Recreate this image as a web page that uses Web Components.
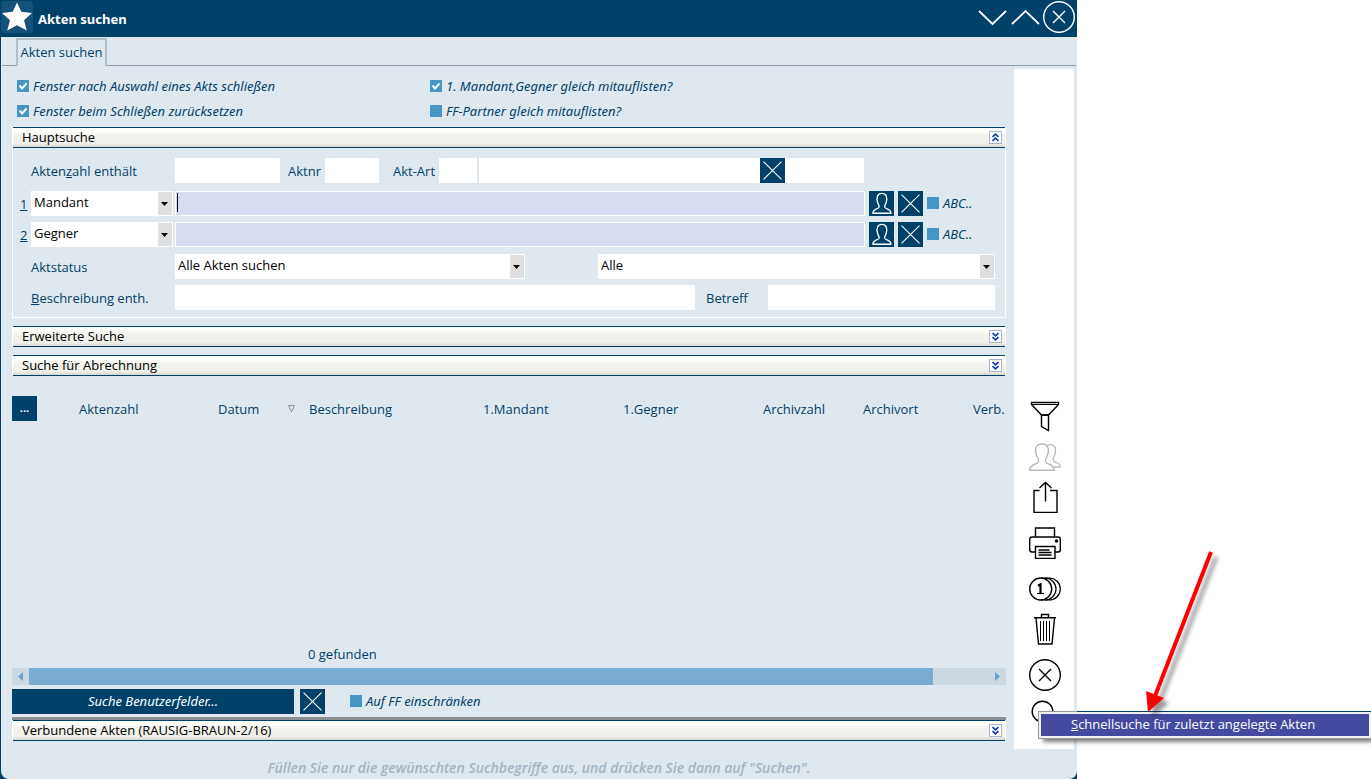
<!DOCTYPE html>
<html lang="de">
<head>
<meta charset="utf-8">
<title>Akten suchen</title>
<style>
  :root {
    --navy: #00416a;
    --panel: #e0e8ef;
    --accent: #4595c5;
    --lilac: #d6ddf1;
    --slanted: "Noto Sans", "Open Sans", sans-serif;
  }
  body {
    margin: 0;
    background: #fff;
    color: var(--navy);
    font: 13px/18px "Open Sans", "Noto Sans", sans-serif;
  }
</style>
</head>
<body>
<akten-page></akten-page>

<script>
const define = (name, html, setup) => {
  const template = document.createElement('template');
  template.innerHTML = html;
  customElements.define(name, class extends HTMLElement {
    constructor() {
      super();
      this.attachShadow({ mode: 'open' }).append(template.content.cloneNode(true));
    }
    connectedCallback() {
      if (setup) setup(this, this.shadowRoot);
    }
  });
};

/* Line icons, all drawn on a 32 x 32 grid. */
const ICONS = {
  filter: '<path d="M2.500 1.500h27v2l-10 10.500h-7L2.500 3.500z"/><path d="M12.500 14v11.500l7 4V14z"/><path d="M3 3.500h26" stroke-width="1"/>',
  people: '<path d="M0.700 29.300C0.500 23 8.500 23.500 9.500 21c.6-2-.2-3-1.500-5.500C6 11.500 5 3 13 3s7 8.500 5 12.500c-1.300 2.500-2.100 3.500-1.500 5.500 1 2.500 9 2 8.800 8.300z"/><path d="M17.500 5.500c2-3 9-2.500 9 3.500 0 3.500-1.200 6-2 7.500-1 2 .2 4 1.500 4.500 2.500 1 5.500 1.500 5.500 5h-6.500"/>',
  share: '<path d="M10.500 9.500h-5.500v22h23v-22H21"/><path d="M16.500 20.500V2M10.500 7l6-5.500 6 5.500"/>',
  printer: '<path d="M6.500 9.500V1h19v8.500"/><path d="M6 25H3q-2.300 0-2.300-2.500V12.500Q.7 10 3 10h26q2.300 0 2.300 2.500V22.500q0 2.500-2.300 2.500h-3"/><path d="M6.500 19.500h19.500v12H6.500z"/><path d="M9.500 23h11M9.500 25.500h13M9.500 28h13"/><circle cx="27.500" cy="14" r="1" fill="currentColor"/>',
  coins: '<circle cx="11.700" cy="16" r="11"/><g stroke-width="1.200"><path d="M16 5a11 11 0 0 1 0 22M20.300 5a11 11 0 0 1 0 22"/><path d="M12 5h8.500M12 27h8.500"/></g><path d="M9 12.800l2.500-1.400V20.500" stroke-width="2.200"/><path d="M8 20.500h7" stroke-width="1.200"/>',
  trash: '<path d="M5 4.700h22M12.500 4.500v-3h7v3M7 5l2.500 26h13.500L25.500 5"/><path d="M11.500 8v20M14.500 8v20M17.500 8v20M20.500 8v20" stroke-width="1"/>',
  cancel: '<circle cx="16" cy="16" r="15.300"/><path d="M10 10l12 12M22 10L10 22"/>',
  search: '<circle cx="13.500" cy="12.500" r="10.300"/><path d="M21 20l9 9"/>',
  down: '<path d="M2 10l13.500 13L29 10" stroke-width="1.800"/>',
  up: '<path d="M2 23l13.500-13L29 23" stroke-width="1.800"/>',
  cross: '<path d="M4.500 4.500l23 23M27.500 4.500l-23 23"/>',
  person: '<path d="M5 28.500c-.5-6 7.500-5 8-8 .2-2-1.500-3.500-2.200-6.500C9.500 8 10.500 3 16.500 3s7 5 5.700 11c-.7 3-2.400 4.500-2.200 6.500.5 3 8.500 2 8 8z" stroke-width="1.700"/>'
};

define('ak-icon', `
  <style>
    :host { display: block; width: 32px; height: 32px; }
    svg { display: block; width: 100%; height: 100%; }
  </style>
  <svg viewBox="0 0 32 32" fill="none" stroke="currentColor" stroke-width="1.400" aria-hidden="true"></svg>
`, (host, root) => { root.querySelector('svg').innerHTML = ICONS[host.getAttribute('name')]; });

/* Square navy button with an icon or short text in its slot. */
define('ak-button', `
  <style>
    :host { display: block; flex: none; width: 25px; height: 25px; }
    button { display: flex; align-items: center; justify-content: center; width: 100%; height: 100%; padding: 0 0 1px; border: 0; background: var(--navy); color: #fff; font: inherit; cursor: pointer; }
    ::slotted(ak-icon) { width: 25px; height: 25px; }
  </style>
  <button type="button"><slot></slot></button>
`, (host, root) => {
  const label = host.getAttribute('label');
  if (label) root.querySelector('button').setAttribute('aria-label', label);
});

define('ak-check', `
  <style>
    :host { display: block; }
    label { display: flex; align-items: center; gap: 4px; height: 24px; font-family: var(--slanted); font-style: italic; white-space: nowrap; }
    span { display: grid; }
    input, svg { grid-area: 1 / 1; width: 12px; height: 12px; margin: 0; }
    input { appearance: none; background: var(--accent); }
    svg { pointer-events: none; visibility: hidden; }
    input:checked + svg { visibility: visible; }
  </style>
  <label><span><input type="checkbox"><svg viewBox="0 0 12 12" fill="none" stroke="#fff" stroke-width="2"><path d="M2.500 5.500l2.500 3 4.500-5"/></svg></span><slot></slot></label>
`, (host, root) => { root.querySelector('input').checked = host.hasAttribute('checked'); });

/* Drop-down frame around a real select passed through the slot. */
define('ak-select', `
  <style>
    :host { display: grid; grid-template-columns: minmax(0, 1fr) 15px; height: 25px; background: #fff; }
    ::slotted(select) { grid-area: 1 / 1 / 2 / 3; width: 100%; height: 25px; margin: 0; padding: 0 20px 4px 3px; border: 0; border-radius: 0; appearance: none; background: none; color: #000; font: inherit; outline: 0; }
    i { grid-area: 1 / 2; display: grid; place-items: center; margin: 1px 1px 1px 0; padding-right: 1px; background: #dfdfdf; pointer-events: none; }
  </style>
  <slot></slot>
  <i><svg width="7" height="4" viewBox="0 0 7 4"><path d="M0 0h7L3.500 4z"/></svg></i>
`);

define('ak-section', `
  <style>
    :host { display: block; }
    .box { border: solid #fff; border-width: 0 1px; }
    :host([open]) .box { border-bottom-width: 1px; }
    header { display: flex; align-items: flex-start; justify-content: space-between; height: 19px; padding: 0 3px 0 9px; border: solid var(--navy); border-width: 1px 0; background: linear-gradient(#fffffa 0 20%, #f7f7f2 30%, #f0f1eb 50% 80%, #d9d5cc); color: #000; }
    h2 { margin: 0; font: inherit; }
    button { display: grid; place-items: center; width: 13px; height: 13px; margin-top: 3px; padding: 0; border: 1px solid #a9b1dc; background: #fff; box-sizing: border-box; }
    :host([open]) button svg { transform: scaleY(-1); }
  </style>
  <div class="box">
    <header><h2></h2><button type="button"><svg width="7" height="9" viewBox="0 0 7 9" fill="none" stroke="#0a3fa8" stroke-width="1.600"><path d="M.5 1l3 2.800L6.500 1M.5 5l3 2.800L6.500 5"/></svg></button></header>
    <slot></slot>
  </div>
`, (host, root) => {
  root.querySelector('h2').textContent = host.getAttribute('heading');
  root.querySelector('button').setAttribute('aria-label', host.getAttribute('heading') + ' umschalten');
});

define('search-form', `
  <style>
    :host { display: block; padding: 10px 10px 7px 7px; }
    form { display: flex; flex-direction: column; gap: 6px; }
    .row { display: flex; align-items: center; height: 25px; }
    .party { margin-top: 2px; }
    .status { margin-top: 1px; }
    .party + .party { margin-top: 0; }
    label { flex: none; box-sizing: border-box; white-space: nowrap; }
    .name { width: 155px; padding-left: 11px; }
    .number { width: 11px; }
    input { box-sizing: border-box; min-width: 0; height: 25px; margin: 0; padding: 0 3px; border: 0; border-radius: 0; background: #fff; color: #000; font: inherit; outline: 0; }
    .nr-label { width: 45px; padding-left: 8px; }
    .art-label { width: 60px; padding-left: 14px; }
    .subject-label { width: 73px; padding-left: 11px; }
    .zahl { width: 105px; }
    .nr { width: 54px; }
    .art { width: 38px; margin-right: 2px; }
    .extra { width: 79px; margin-right: 131px; }
    .grow { flex: 1 1 0; }
    .who { flex: none; width: 142px; margin-right: 2px; }
    .entry { position: relative; display: flex; flex: 1 1 0; }
    .entry input { flex: 1; background: var(--lilac); border: 1px solid #fff; }
    .caret { position: absolute; left: 2px; top: 2px; width: 1px; height: 19px; background: #000; }
    .state { flex: 350 1 0; margin-right: 73px; }
    .kind { flex: 397 1 0; }
    .description { flex: 520 1 520px; }
    .subject { flex: 227 1 227px; }
    ak-button { margin-left: 4px; }
    ak-check { width: 68px; margin-left: 4px; height: 25px; }
    .row .flush { margin-left: 0; }
  </style>
  <form>
    <div class="row">
      <label class="name" for="zahl">Akten<u>z</u>ahl enthält</label>
      <input id="zahl" class="zahl">
      <label class="nr-label" for="nr">Aktnr</label>
      <input id="nr" class="nr">
      <label class="art-label" for="art">Akt-Art</label>
      <input id="art" class="art">
      <input class="grow" aria-label="Bezeichnung der Akt-Art">
      <ak-button class="flush" label="Akt-Art leeren"><ak-icon name="cross"></ak-icon></ak-button>
      <input class="extra" aria-label="Zusatz">
    </div>
    <div class="row party">
      <label class="number" for="p1"><u>1</u></label>
      <ak-select class="who"><select id="p1"><option>Mandant</option></select></ak-select>
      <div class="entry"><input aria-label="Mandant"><span class="caret"></span></div>
      <ak-button label="Person wählen"><ak-icon name="person"></ak-icon></ak-button>
      <ak-button label="Mandant leeren"><ak-icon name="cross"></ak-icon></ak-button>
      <ak-check>ABC..</ak-check>
    </div>
    <div class="row party">
      <label class="number" for="p2"><u>2</u></label>
      <ak-select class="who"><select id="p2"><option>Gegner</option></select></ak-select>
      <div class="entry"><input aria-label="Gegner"></div>
      <ak-button label="Person wählen"><ak-icon name="person"></ak-icon></ak-button>
      <ak-button label="Gegner leeren"><ak-icon name="cross"></ak-icon></ak-button>
      <ak-check>ABC..</ak-check>
    </div>
    <div class="row status">
      <label class="name" for="status">Aktstatus</label>
      <ak-select class="state"><select id="status"><option>Alle Akten suchen</option></select></ak-select>
      <ak-select class="kind"><select aria-label="Aktauswahl"><option>Alle</option></select></ak-select>
    </div>
    <div class="row">
      <label class="name" for="beschr"><u>B</u>eschreibung enth.</label>
      <input id="beschr" class="description">
      <label class="subject-label" for="betreff">Betreff</label>
      <input id="betreff" class="subject">
    </div>
  </form>
`);

define('result-list', `
  <style>
    :host { display: flex; flex-direction: column; }
    table { width: 100%; table-layout: fixed; border-collapse: collapse; }
    th { height: 25px; padding: 0; font-weight: 400; text-align: left; white-space: nowrap; }
    .sorted { display: flex; align-items: center; justify-content: space-between; padding-right: 14px; }
    ak-button { font-weight: 700; font-size: 11px; }
    .space { flex: 1; min-height: 100px; }
    .count { margin: 0 0 5px; padding-left: 296px; }
    .scroll { display: flex; align-items: stretch; height: 17px; background: #ccd9e1; }
    .scroll button { display: grid; place-items: center; flex: none; width: 17px; padding: 0; border: 0; background: none; }
    .thumb { flex: 113; background: #7aacd1; }
    .rest { flex: 7; }
  </style>
  <table>
    <colgroup><col style="width:67px"><col style="width:139px"><col style="width:91px"><col><col style="width:140px"><col style="width:140px"><col style="width:100px"><col style="width:110px"><col style="width:33px"></colgroup>
    <thead><tr>
      <th><ak-button label="Spalten wählen">...</ak-button></th>
      <th>Aktenzahl</th>
      <th><span class="sorted">Datum<svg width="7" height="8" viewBox="0 0 7 8" fill="none" stroke="#8e9499"><path d="M.5.500h6L3.500 7z"/></svg></span></th>
      <th>Beschreibung</th><th>1.Mandant</th><th>1.Gegner</th><th>Archivzahl</th><th>Archivort</th><th>Verb.</th>
    </tr></thead>
    <tbody></tbody>
  </table>
  <div class="space"></div>
  <p class="count">0 gefunden</p>
  <div class="scroll">
    <button type="button" aria-label="Nach links"><svg width="5" height="9" viewBox="0 0 5 9"><path d="M5 0v9L0 4.500z" fill="#6ba3cd"/></svg></button>
    <div class="thumb"></div><div class="rest"></div>
    <button type="button" aria-label="Nach rechts"><svg width="5" height="9" viewBox="0 0 5 9"><path d="M0 0v9L5 4.500z" fill="#6ba3cd"/></svg></button>
  </div>
`);

define('context-menu', `
  <style>
    :host { display: block; box-sizing: border-box; height: 28px; padding: 2px; border: 1px solid #999; border-right: 0; background: #f1f1f3; box-shadow: 4px 4px 4px -1px rgba(0, 0, 0, .5); }
    :host::before { content: ""; position: absolute; top: -1px; left: 38px; right: 0; height: 1px; background: var(--navy); }
    button { display: block; width: 100%; height: 22px; padding: 0 0 2px 30px; border: 0; background: #444a9f; color: #fff; font: inherit; text-align: left; white-space: nowrap; }
  </style>
  <button type="button" role="menuitem"><u>S</u>chnellsuche für zuletzt angelegte Akten</button>
`);

define('tool-rail', `
  <style>
    :host { display: flex; flex-direction: column; justify-content: flex-end; align-items: center; gap: 14px; padding-bottom: 18px; background: #fff; color: #000; }
    div { display: flex; flex-direction: column; gap: 8px; }
    button { display: block; width: 32px; height: 32px; margin: 0 0 0 2px; padding: 0; border: 0; background: none; color: inherit; }
    button:disabled { color: #bbb; }
    .anchor { position: relative; display: block; }
    context-menu { position: absolute; left: 11px; top: 12px; width: 333px; z-index: 2; }
  </style>
  <div>
    <button type="button" aria-label="Filter"><ak-icon name="filter"></ak-icon></button>
    <button type="button" aria-label="Personen" disabled><ak-icon name="people"></ak-icon></button>
    <button type="button" aria-label="Export"><ak-icon name="share"></ak-icon></button>
  </div>
  <div><button type="button" aria-label="Drucken"><ak-icon name="printer"></ak-icon></button></div>
  <div>
    <button type="button" aria-label="Kosten"><ak-icon name="coins"></ak-icon></button>
    <button type="button" aria-label="Löschen"><ak-icon name="trash"></ak-icon></button>
  </div>
  <div>
    <button type="button" aria-label="Abbrechen"><ak-icon name="cancel"></ak-icon></button>
    <span class="anchor">
      <button type="button" aria-label="Suchen"><ak-icon name="search"></ak-icon></button>
      <context-menu role="menu"></context-menu>
    </span>
  </div>
`);

define('title-bar', `
  <style>
    :host { display: flex; align-items: center; height: 37px; background: var(--navy); color: #fff; }
    .star { flex: none; width: 32px; height: 32px; margin: 0 5px 4px 1px; border-radius: 4px; background: #14527b; }
    h1 { flex: 1; margin: 0; font: 700 13px/18px var(--slanted); }
    nav { display: flex; gap: 1px; padding: 0 2px 3px 0; }
    button { display: block; padding: 0; border: 0; background: none; color: #fff; }
  </style>
  <svg class="star" viewBox="0 0 32 32" aria-hidden="true"><path d="M16 1.500l4.300 9.300 10.700 1.200-8 7.300 2.800 10.200L16 24.300 6.200 29.500 9 19.300 1 12l10.700-1.200z" fill="#fff"/></svg>
  <h1><slot></slot></h1>
  <nav>
    <button type="button" aria-label="Verkleinern"><ak-icon name="down"></ak-icon></button>
    <button type="button" aria-label="Vergrößern"><ak-icon name="up"></ak-icon></button>
    <button type="button" aria-label="Schließen"><ak-icon name="cancel"></ak-icon></button>
  </nav>
`);

define('tab-strip', `
  <style>
    :host { display: flex; height: 29px; padding-top: 1px; box-sizing: border-box; }
    :host::before, :host::after { content: ""; border-bottom: 1px solid #8f9ba6; }
    :host::before { width: 14px; margin-left: 1px; }
    :host::after { flex: 1; margin-right: 1px; }
    a { box-sizing: border-box; width: 91px; padding-top: 3px; border: 2px solid #adbfcb; border-bottom: 0; color: inherit; text-align: center; text-decoration: none; white-space: nowrap; }
  </style>
  <a href="#suche"><slot></slot></a>
`);

define('akten-window', `
  <style>
    :host { display: flex; flex-direction: column; min-height: 100vh; background: var(--navy); }
    .body { display: flex; flex-direction: column; flex: 1; margin-left: 1px; border-radius: 0 0 8px 8px; background: var(--panel); }
    .work { display: flex; flex: 1; gap: 8px; padding: 3px 3px 0 11px; }
    main { display: flex; flex-direction: column; flex: 1; min-width: 0; padding-top: 5px; }
    tool-rail { flex: none; width: 60px; }
    .options { display: grid; grid-template-columns: 413px 1fr; grid-auto-rows: 25px; padding-left: 5px; margin-bottom: 3px; }
    .gap { margin-top: 8px; }
    result-list { flex: 1; margin-top: 20px; }
    .actions { display: flex; height: 25px; margin: 4px 0 3px; }
    .wide { width: 282px; margin-right: 6px; font-family: var(--slanted); font-style: italic; line-height: 18px; }
    .actions ak-check { margin-left: 25px; }
    .linked { border-top: 3px solid #8c8f92; margin-bottom: 8px; }
    footer { height: 30px; color: #a3b4c2; font: italic 600 14px/38px "Open Sans", "Noto Sans", sans-serif; text-align: center; overflow: hidden; white-space: nowrap; }
  </style>
  <title-bar>Akten suchen</title-bar>
  <div class="body">
    <tab-strip>Akten suchen</tab-strip>
    <div class="work">
      <main>
        <div class="options">
          <ak-check checked>Fenster nach Auswahl eines Akts schließen</ak-check>
          <ak-check checked>1. Mandant,Gegner gleich mitauflisten?</ak-check>
          <ak-check checked>Fenster beim Schließen zurücksetzen</ak-check>
          <ak-check>FF-Partner gleich mitauflisten?</ak-check>
        </div>
        <ak-section id="suche" heading="Hauptsuche" open><search-form></search-form></ak-section>
        <ak-section class="gap" heading="Erweiterte Suche"></ak-section>
        <ak-section class="gap" heading="Suche für Abrechnung"></ak-section>
        <result-list></result-list>
        <div class="actions">
          <ak-button class="wide">Suche Benutzerfelder...</ak-button>
          <ak-button label="Benutzerfelder leeren"><ak-icon name="cross"></ak-icon></ak-button>
          <ak-check>Auf FF einschränken</ak-check>
        </div>
        <ak-section class="linked" heading="Verbundene Akten (RAUSIG-BRAUN-2/16)"></ak-section>
      </main>
      <tool-rail></tool-rail>
    </div>
    <footer>Füllen Sie nur die gewünschten Suchbegriffe aus, und drücken Sie dann auf "Suchen".</footer>
  </div>
`);

/* Red pointer that leads to the open menu entry. */
define('pointer-arrow', `
  <style>
    :host { display: flex; flex-direction: column; justify-content: flex-end; padding-bottom: 54px; pointer-events: none; }
    svg { position: relative; z-index: 3; display: block; width: 180px; height: 180px; filter: drop-shadow(5px 5px 2px rgba(0, 0, 0, .4)); }
  </style>
  <svg viewBox="0 0 180 180" aria-hidden="true"><path d="M134 7L78 151" stroke="#f00" stroke-width="4"/><path d="M69 146l18 7-16 14z" fill="#f00"/></svg>
`);

define('akten-page', `
  <style>
    :host { display: grid; grid-template-columns: minmax(0, 1fr) 294px; min-height: 100vh; overflow: hidden; }
  </style>
  <akten-window></akten-window>
  <pointer-arrow></pointer-arrow>
`);
</script>
</body>
</html>
